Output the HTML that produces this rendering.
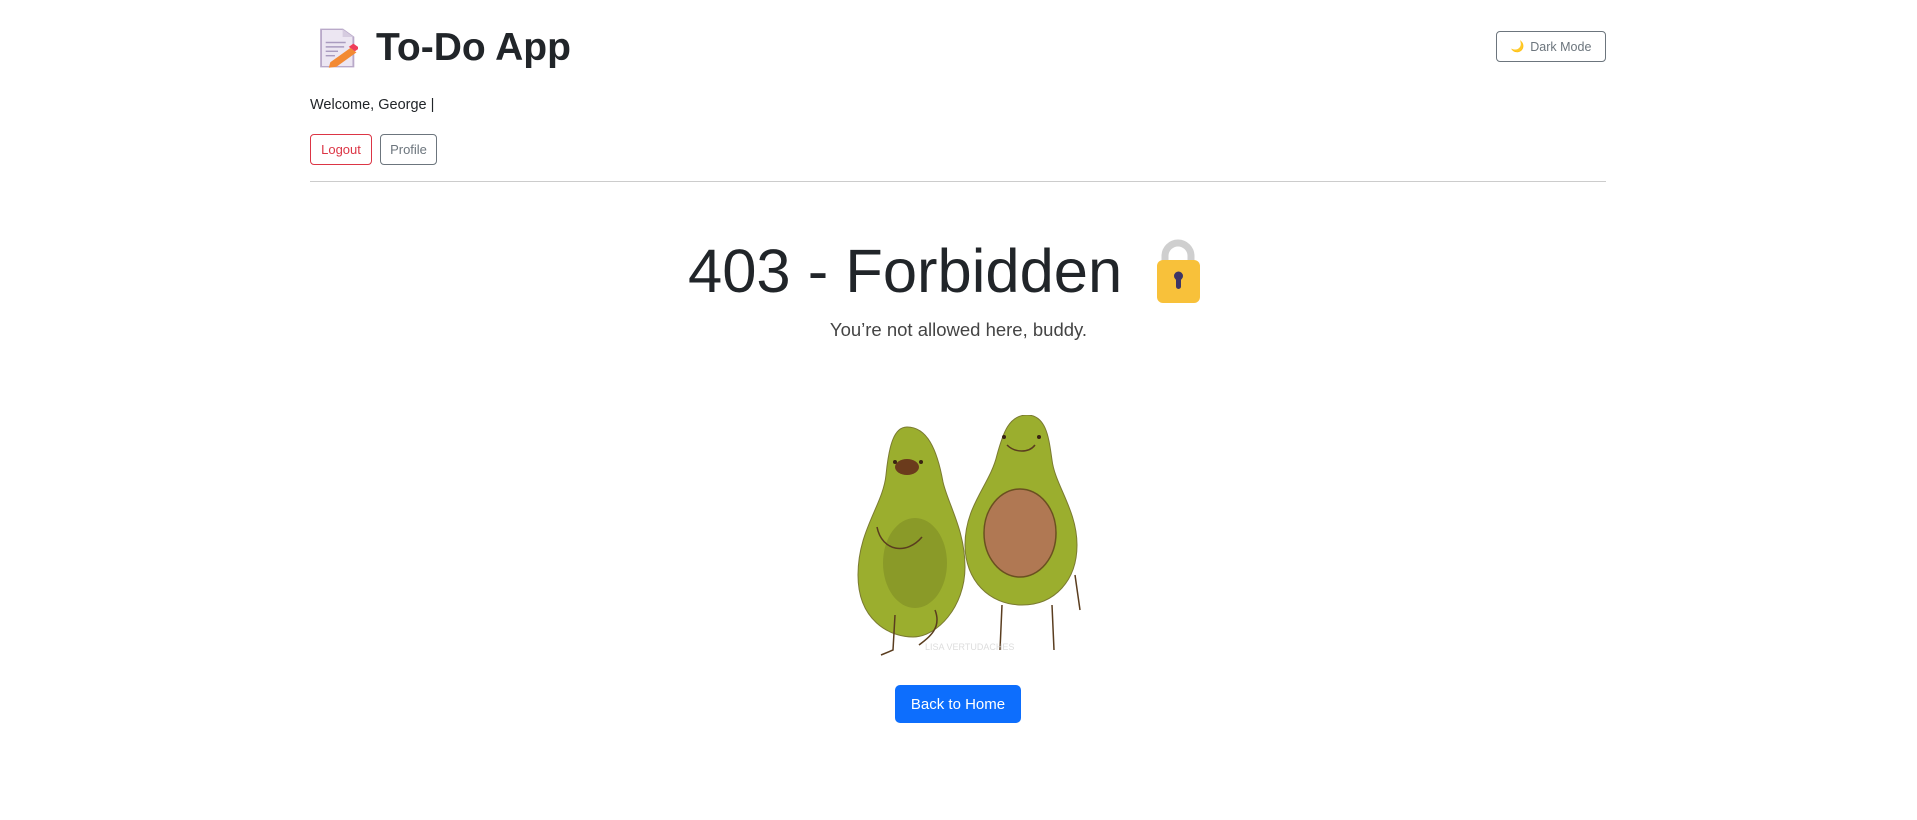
<!DOCTYPE html>
<html><head><meta charset="utf-8"><style>
*{box-sizing:border-box}
body{margin:0;width:1917px;height:820px;background:#fff;font-family:"Liberation Sans",sans-serif;color:#212529;position:relative;overflow:hidden}
.a{position:absolute}
.btn{position:absolute;border:1px solid;border-radius:4px;font-size:14px;display:flex;align-items:center;justify-content:center;background:#fff}
</style></head><body>
<svg class="a" style="left:318px;top:26px" width="40" height="44" viewBox="0 0 26 40" preserveAspectRatio="none">
<path d="M2 3h14l7 7v27H2z" fill="#ece6f2" stroke="#b9a9c9" stroke-width="1.2"/>
<path d="M16 3v7h7" fill="#d6cce0"/>
<g stroke="#a99bbf" stroke-width="1.3"><line x1="5" y1="15" x2="18" y2="15"/><line x1="5" y1="19" x2="17" y2="19"/><line x1="5" y1="23" x2="13" y2="23"/><line x1="5" y1="27" x2="11" y2="27"/></g>
<path d="M8 33l13-13 4 4-13 13-5 1z" fill="#f38a33"/>
<path d="M20 19l3-3 4 4-3 3z" fill="#ef3d5a"/>
</svg>
<div class="a" style="left:376px;top:24px;font-size:39px;font-weight:bold;line-height:48px">To-Do App</div>
<div class="btn" style="left:1496px;top:31px;width:110px;height:31px;border-color:#6c757d;color:#6c757d;font-size:12.5px"><span style="color:#f5b82e;margin-right:6px;font-size:11px">🌙</span>Dark Mode</div>
<div class="a" style="left:310px;top:97px;font-size:14.5px">Welcome, George |</div>
<div class="btn" style="left:310px;top:134px;width:62px;height:31px;border-color:#dc3545;color:#dc3545;font-size:13px">Logout</div>
<div class="btn" style="left:380px;top:134px;width:57px;height:31px;border-color:#6c757d;color:#6c757d;font-size:13px">Profile</div>
<div class="a" style="left:310px;top:181px;width:1296px;height:1px;background:#ccc"></div>
<div class="a" style="left:688px;top:232px;font-size:61.5px;line-height:80px;color:#212529;white-space:nowrap">403 - Forbidden</div>
<svg class="a" style="left:1155px;top:238px" width="46" height="66" viewBox="0 0 46 66">
<path d="M10 28V18a13 13 0 0 1 26 0v10" fill="none" stroke="#cfcfcf" stroke-width="7"/>
<rect x="2" y="22" width="43" height="43" rx="6" fill="#f8c13a"/>
<circle cx="23.5" cy="38" r="4.5" fill="#3d3566"/><rect x="21" y="38" width="5" height="13" rx="2.5" fill="#3d3566"/>
</svg>
<div class="a" style="left:0;width:1917px;top:319px;text-align:center;font-size:18.5px;color:#444">You’re not allowed here, buddy.</div>
<svg class="a" style="left:855px;top:415px" width="270" height="250" viewBox="0 0 270 250">
<path d="M52 12c20 0 30 22 36 55 5 22 22 48 22 85 0 40-28 70-52 70S3 205 3 160c0-45 25-70 28-100 3-30 8-48 21-48z" fill="#9bae2e" stroke="#7a7a30" stroke-width="1"/>
<ellipse cx="60" cy="148" rx="32" ry="45" fill="#8a9a28"/>
<path d="M22 112c5 25 30 28 45 10" stroke="#5a3d1f" fill="none" stroke-width="1.5"/>
<ellipse cx="52" cy="52" rx="12" ry="8" fill="#6b3b1c"/>
<circle cx="40" cy="47" r="2" fill="#3a2412"/><circle cx="66" cy="47" r="2" fill="#3a2412"/>
<path d="M40 200l-2 35-12 5M80 195c8 20-10 30-16 35" stroke="#5a3d1f" fill="none" stroke-width="1.5"/>
<g transform="translate(22 0)">
<path d="M150 0c20 0 22 25 25 45 3 25 25 50 25 85 0 35-22 60-55 60s-57-25-57-60c0-40 25-60 32-90 6-22 12-40 30-40z" fill="#9bae2e" stroke="#7a7a30" stroke-width="1"/>
<ellipse cx="143" cy="118" rx="36" ry="44" fill="#b07853" stroke="#6a5020" stroke-width="1.5"/>
<path d="M130 30c8 8 22 8 28 0" stroke="#5a3d1f" fill="none" stroke-width="1.5"/>
<circle cx="127" cy="22" r="2" fill="#3a2412"/><circle cx="162" cy="22" r="2" fill="#3a2412"/>
<path d="M125 190l-2 45M175 190l2 45M198 160l5 35" stroke="#5a3d1f" fill="none" stroke-width="1.5"/>
</g>
<text x="70" y="235" font-size="9" fill="#ddd" font-family="Liberation Sans,sans-serif">LISA VERTUDACHES</text>
</svg>
<div class="a" style="left:895px;top:685px;width:126px;height:38px;background:#0d6efd;border-radius:5px;color:#fff;font-size:15px;display:flex;align-items:center;justify-content:center">Back to Home</div>
</body></html>
